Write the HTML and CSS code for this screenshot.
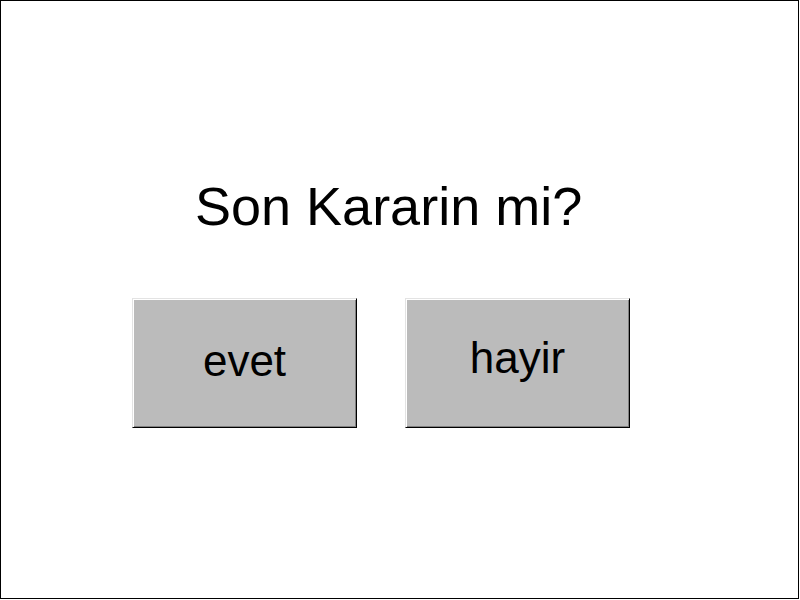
FILE: index.html
```html
<!DOCTYPE html>
<html lang="tr">
<head>
    <meta charset="UTF-8">
    <title>Son Karar</title>
    <link rel="stylesheet" href="styles.css">
</head>
<body>
    <div class="frame">
        <h1 class="question">Son Kararin mi?</h1>
        <div class="choices">
            <button class="choice choice-yes">evet</button>
            <button class="choice choice-no">hayir</button>
        </div>
    </div>
</body>
</html>
```

FILE: styles.css
```css
body {
    margin: 0;
    background: #fff;
    font-family: "Liberation Sans", Arial, sans-serif;
}
.frame {
    box-sizing: border-box;
    width: 799px;
    height: 599px;
    border: 1px solid #000;
    padding-top: 178px;
    display: flex;
    flex-direction: column;
}
.question {
    margin: 0 0 0 194px;
    font-size: 54px;
    font-weight: normal;
    line-height: 1;
    color: #000;
}
.choices {
    display: flex;
    gap: 48px;
    margin-top: 65px;
    padding-left: 131px;
}
.choice {
    box-sizing: border-box;
    width: 225px;
    height: 130px;
    padding: 0;
    background: #bbb;
    border: 1px solid;
    border-color: #e3e3e3 #000 #000 #e3e3e3;
    box-shadow: inset 1px 1px #fff, inset -1px -1px #808080;
    font-family: "Liberation Sans", Arial, sans-serif;
    font-size: 44px;
    line-height: 1;
    color: #000;
}
.choice-yes {
    padding-bottom: 4px;
}
.choice-no {
    padding-bottom: 10px;
}
```
